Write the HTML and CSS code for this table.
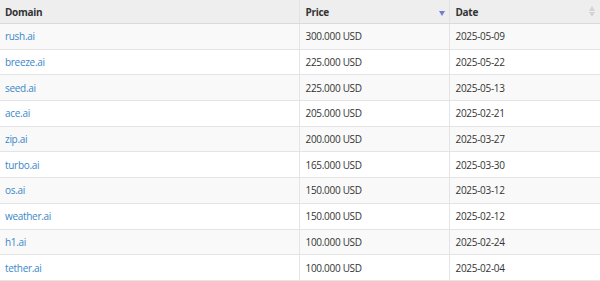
FILE: index.html
```html
<!DOCTYPE html>
<html>
<head>
<meta charset="utf-8">
<link rel="stylesheet" href="styles.css">
</head>
<body>
<table class="grid">
  <colgroup>
    <col class="c-domain">
    <col class="c-price">
    <col class="c-date">
  </colgroup>
  <thead>
    <tr>
      <th>Domain</th>
      <th class="sortable">Price<span class="sort-desc"></span></th>
      <th class="sortable">Date<span class="sort-both"><span class="up"></span><span class="down"></span></span></th>
    </tr>
  </thead>
  <tbody>
    <tr><td><a href="#">rush.ai</a></td><td>300.000 USD</td><td>2025-05-09</td></tr>
    <tr><td><a href="#">breeze.ai</a></td><td>225.000 USD</td><td>2025-05-22</td></tr>
    <tr><td><a href="#">seed.ai</a></td><td>225.000 USD</td><td>2025-05-13</td></tr>
    <tr><td><a href="#">ace.ai</a></td><td>205.000 USD</td><td>2025-02-21</td></tr>
    <tr><td><a href="#">zip.ai</a></td><td>200.000 USD</td><td>2025-03-27</td></tr>
    <tr><td><a href="#">turbo.ai</a></td><td>165.000 USD</td><td>2025-03-30</td></tr>
    <tr><td><a href="#">os.ai</a></td><td>150.000 USD</td><td>2025-03-12</td></tr>
    <tr><td><a href="#">weather.ai</a></td><td>150.000 USD</td><td>2025-02-12</td></tr>
    <tr><td><a href="#">h1.ai</a></td><td>100.000 USD</td><td>2025-02-24</td></tr>
    <tr><td><a href="#">tether.ai</a></td><td>100.000 USD</td><td>2025-02-04</td></tr>
  </tbody>
</table>
</body>
</html>
```
FILE: styles.css
```css
html, body {
  margin: 0;
  padding: 0;
  background: #fff;
}
body {
  font-family: "Open Sans", "Noto Sans", sans-serif;
  font-size: 10px;
  letter-spacing: -0.3px;
  color: #333;
}
.grid {
  width: 600px;
  border-collapse: collapse;
  table-layout: fixed;
}
.c-domain { width: 299px; }
.c-price { width: 150px; }
.c-date { width: 151px; }
.grid th {
  position: relative;
  height: 23px;
  padding: 0 5px 0 5px;
  text-align: left;
  font-weight: 700;
  font-size: 10px;
  color: #333;
  background: #eeeeee;
  border-bottom: 1px solid #dadada;
  border-left: 1px solid #e2e2e2;
}
.grid th:first-child, .grid td:first-child {
  border-left: none;
}
.grid th.sortable, .grid td {
  padding-left: 6px;
}
.grid td:first-child, .grid th:first-child {
  padding-left: 5px;
}
.grid td {
  height: 24.7px;
  padding-top: 0;
  padding-bottom: 0;
  border-bottom: 1px solid #e4e4e4;
  border-left: 1px solid #e4e4e4;
  white-space: nowrap;
}
.grid tbody tr:nth-child(odd) td {
  background: #f9f9f9;
}
.grid tbody tr:nth-child(even) td {
  background: #ffffff;
}
.grid a {
  color: #3a87c9;
  text-decoration: none;
}
.sort-desc {
  position: absolute;
  right: 4px;
  top: 11px;
  width: 0;
  height: 0;
  border-left: 3.5px solid transparent;
  border-right: 3.5px solid transparent;
  border-top: 5px solid #6f7fd6;
}
.sort-both {
  position: absolute;
  right: 4px;
  top: 6px;
  width: 7px;
  height: 12px;
}
.sort-both .up, .sort-both .down {
  position: absolute;
  left: 0;
  width: 0;
  height: 0;
  border-left: 3.5px solid transparent;
  border-right: 3.5px solid transparent;
}
.sort-both .up {
  top: 0;
  border-bottom: 5px solid #d4d4d4;
}
.sort-both .down {
  top: 6px;
  border-top: 5px solid #d4d4d4;
}
```
